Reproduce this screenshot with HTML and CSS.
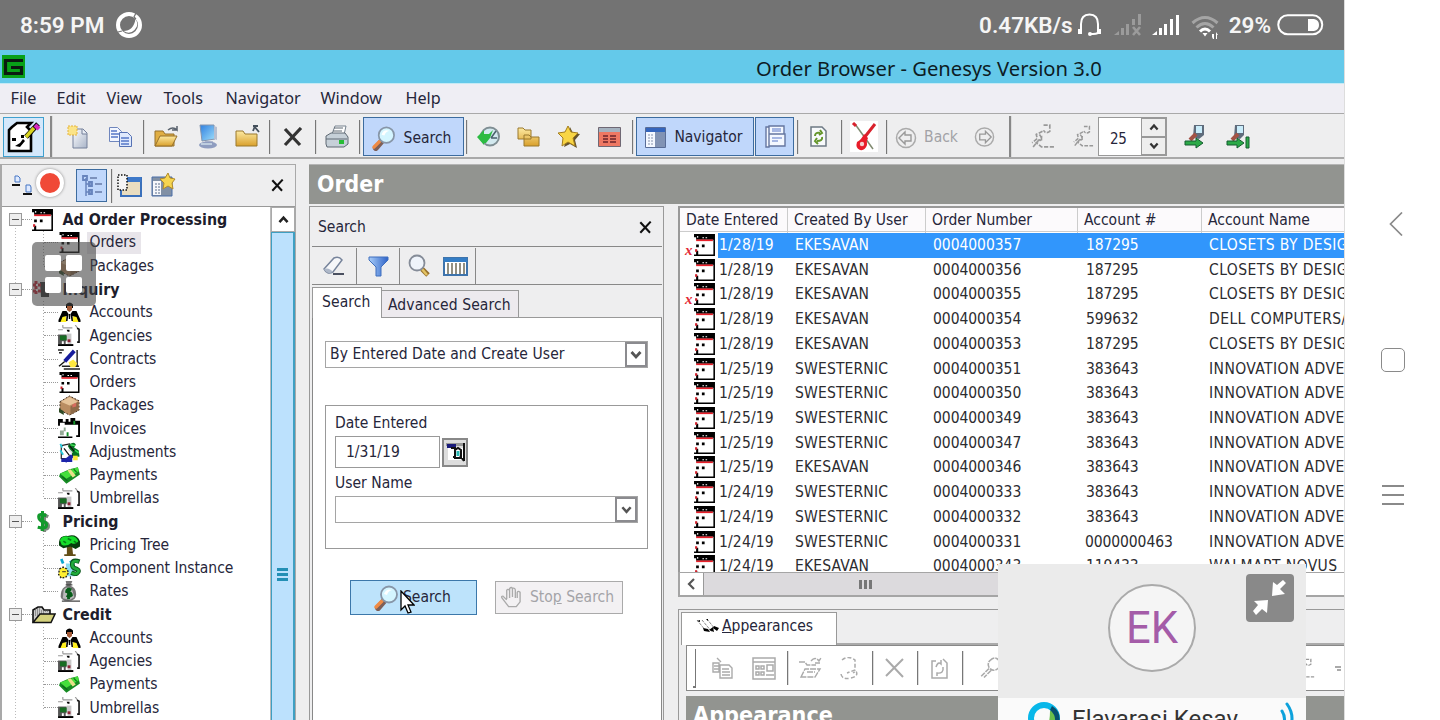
FILE: index.html
```html
<!DOCTYPE html>
<html lang="en">
<head>
<meta charset="utf-8">
<title>Order Browser - Genesys Version 3.0</title>
<link rel="stylesheet" href="styles.css">
</head>
<body>
<svg class="defs" aria-hidden="true">
  <defs>
    <linearGradient id="gold" x1="0" y1="0" x2="0" y2="1"><stop offset="0" stop-color="#fdeaa2"/><stop offset="1" stop-color="#d9a02c"/></linearGradient>
    <linearGradient id="steel" x1="0" y1="0" x2="1" y2="1"><stop offset="0" stop-color="#fdfeff"/><stop offset="1" stop-color="#a9b4c8"/></linearGradient>
    <linearGradient id="sky" x1="0" y1="0" x2="1" y2="1"><stop offset="0" stop-color="#2f7fe0"/><stop offset="1" stop-color="#9fe0fb"/></linearGradient>
    <linearGradient id="funnel" x1="0" y1="0" x2="1" y2="0"><stop offset="0" stop-color="#a9cdf8"/><stop offset="1" stop-color="#2e63c8"/></linearGradient>
    <symbol id="calendar" viewBox="0 0 20 21"><path fill="#fff" d="M1 0h19v21H1z"/><path d="M0 0h20v21H2v-1.500h16.500V5.500H2V3H0z"/><path fill="#e8202a" d="M2 5.200h16v1.600H2z"/><path fill="#fff" d="M3 2h1v1.500H3zM8 3h1.500v1H8zM11 3h1.500v1H11z"/><path d="M2 10h2.600v2.600H2zM7.500 10h2.600v2.600H7.500zM2 16h2v5H0v-1.500h2z"/><path fill="#d0202a" d="M1 14.500h2v2.500H1z"/></symbol>
    <symbol id="person" viewBox="0 0 22 21"><path fill="#ffef20" d="M2 15l4-3h10l4 3v5H2z"/><path fill="#fff" d="M7 11h8l-1 9H8z"/><path d="M7.500 2.500q3.500-4 7 0V6h-7zM4 9h4l2 3-1 7H7.500l.5-5-4 1-2 5H0v-2zM14 9h4l4 9v2h-2l-2-5-4-1 .5 5h-1.500l-1-7zM10.300 12h1.400v5h-1.400z"/><path fill="#a45b38" d="M8.500 4h5v4l-2.500 2-2.500-2z"/></symbol>
    <symbol id="agency" viewBox="0 0 24 22"><path fill="none" stroke="#999" stroke-width="1.200" d="M5 3h10M0 5h5M5 0v3M18 0l3 4"/><path d="M9 5h3v2h-2z"/><path fill="#555" d="M0 10h9v10H0z"/><path fill="#c9c9c9" d="M9 9h5v11H9z"/><path fill="#176d22" d="M2 11h7v5H2z"/><path fill="#fff" d="M4 17h2v3H4zM8 17h2v3H8z"/><path fill="#8c2436" d="M10 15h3v3h-3z"/><path d="M0 20h16v2H0z"/><path fill="none" stroke="#111" stroke-width="1.700" d="M20 3.500l2 1V18h-2"/></symbol>
    <symbol id="contract" viewBox="0 0 24 22"><path fill="#fff" d="M3 1h17v18H3z"/><path fill="none" stroke="#222" stroke-width="1.500" d="M0 1h6M1 4h3M20 1v17M4 18h18M6 21h17"/><path fill="#ffe940" d="M11 14l5-3 4 4-2 4h-5z"/><path stroke="#161b9c" stroke-width="4" d="M17 2L7 13"/><path stroke="#111" stroke-width="1.400" d="M7 13l-6 5"/></symbol>
    <symbol id="box" viewBox="0 0 22 22"><path fill="#b98d62" stroke="#3b2c1d" stroke-dasharray="2 1.500" d="M1 7l10-6 10 5v10l-10 5L1 16z"/><path fill="#e6c49a" d="M2 7l9-5 9 5-9 4z"/><path fill="#8d6a48" d="M12 12l8-5v9l-8 5z"/><path fill="#d66c5e" d="M14 10l4-2v4l-4 1z"/><path fill="#2d4a25" d="M0 14l5 3v4l-5-3z"/></symbol>
    <symbol id="invoice" viewBox="0 0 24 22"><path fill="#fff" d="M2 2h20v18H2z"/><path d="M0 1h5v3h3V1h3v3h2V0h5v3h5v17h-4v-2h2V7H7V5H2v3H0zM0 19.500h15V21H0z"/><path fill="#95aa97" d="M2 13h4v5H2zM6 10h2v4H6z"/><path fill="#159029" d="M16 3h2v4h-2zM9 15h2v4H9z"/></symbol>
    <symbol id="adjust" viewBox="0 0 24 23"><path fill="#fff" stroke="#222" stroke-width="1.300" d="M3 4l9-2 5 6-3 11-11-1z"/><path fill="#087323" d="M10 4q7-6 9-1l-2 3 5 3 1 7-6 1z"/><path stroke="#3fdf55" stroke-width="1.600" d="M13 3l5 1M18 9l4 3"/><path stroke="#25c8da" stroke-width="2" d="M2 2l2 4M2 9l3 5"/><path stroke="#1c24aa" stroke-width="4" d="M3 20h12M7 21l8-6"/><path stroke="#111" stroke-width="1.300" d="M6 7l6 8M12 4l5 6"/><path fill="#ffe838" d="M16 15h5v5h-5z"/><path stroke="#ddd" stroke-width="2" d="M11 8l4 4"/></symbol>
    <symbol id="cash" viewBox="0 0 22 18"><path fill="#168b23" d="M1 10l7 7L21 8l-2-7-8 2-9 4z"/><path fill="#45df3c" d="M2 7l9-3L19 1l1 4-12 7z"/><path fill="#e9e08a" d="M9 4l3-1 5 6-3 2z"/><path stroke="#0b6819" d="M4 10l5 4M15 3l3 3"/></symbol>
    <symbol id="dollar" viewBox="0 0 14 22"><path fill="none" stroke="#7d8a7e" stroke-width="3.500" d="M13 6Q5 2 5 8q0 3 4 4 5 1 4 5-1 3-8 2M9 2v20"/><path fill="none" stroke="#129a2c" stroke-width="3.200" d="M11 5Q3 2 3 6q0 4 5 5 4 1 3 5-1 3-9 1M7 0v21"/></symbol>
    <symbol id="tree" viewBox="0 0 24 24"><path fill="#624d16" d="M9 12h6l1 10h3v2H6v-2h3z"/><path fill="#063d0d" d="M0 8Q1 0 10 1q10-3 14 6v6l-5 3-6-3-8 2-5-3z"/><path fill="#16dc2a" d="M1 6Q4 0 11 2q8-2 11 5-3 5-8 2-6 5-11 2z"/><path stroke="#087b17" stroke-width="2" d="M5 7l3 2M10 4l4 2M17 7l3 2"/></symbol>
    <symbol id="component" viewBox="0 0 24 23"><path fill="#8bdcf1" d="M8 6h10v14H9z"/><path stroke="#09a7d0" stroke-width="3" d="M3 1l2 5M13 3l3 6"/><path fill="none" stroke="#08551a" stroke-width="5" d="M23 4q-8-3-8 3 0 4 5 5 4 2 0 5-2 1-6-1"/><path fill="none" stroke="#20ab3c" stroke-width="3" d="M22 4q-7-2-7 3 0 4 5 5 4 2 0 5-2 1-6-1"/><path fill="#ffef30" stroke="#222" stroke-dasharray="2 1.500" stroke-width="1.500" d="M1 12l4-2 4 2 2 4-3 5-5 1-3-4z"/><path stroke="#222" d="M4 15h4M13 20v3"/></symbol>
    <symbol id="bag" viewBox="0 0 24 22"><path fill="#777" d="M8 0h7l-2 5q6 2 6 9 0 7-8 7Q1 21 3 13q1-6 6-8z"/><path fill="#bbb" d="M6 9q4-5 9 1l2 7-5 3-7-2z"/><path fill="none" stroke="#075d19" stroke-width="3" d="M14 9q-5-1-5 2 5 1 5 4-2 2-5 0M11 7v12"/><path stroke="#444" stroke-width="1.400" d="M4 21h19M8 4h7"/></symbol>
    <symbol id="openfolder" viewBox="0 0 24 18"><path fill="#ccc" stroke="#111" stroke-width="1.600" d="M1 16V4l5-3h4l2 3h6v4"/><path stroke="#555" stroke-dasharray="1 1" d="M3 5h13M3 7h10M3 3h6M3 9h4"/><path fill="#d4d17d" stroke="#111" stroke-width="1.500" d="M1 16.500L8 8h15l-4 8.500z"/></symbol>
    <symbol id="lens" viewBox="0 0 26 26"><path stroke="#7d5f58" stroke-width="6" stroke-linecap="round" d="M5 23l6-7"/><path stroke="#ef8b45" stroke-width="3.500" stroke-linecap="round" d="M3 22l6-6"/><circle cx="16" cy="9.500" r="8" fill="#d4f5ff" stroke="#8796a8" stroke-width="1.800"/><path fill="#fff" d="M11 9q2-6 8-4-4 1-5 5z"/></symbol>
    <symbol id="ghostlens" viewBox="0 0 24 24"><path fill="none" stroke="#aaa" stroke-width="1.600" stroke-dasharray="5 1" d="M11 4q5-5 9 0t-1 8q-5 4-9-1-2-4 1-7zM10 12l-8 8M12 14l-7 7"/></symbol>
    <symbol id="ghostfind" viewBox="0 0 24 24"><path fill="none" stroke="#999" stroke-width="1.600" stroke-dasharray="4 1.500" d="M13 1h6v6q-4 3-6-1M12 7l-6 3 1 4-5 4M9 10l3 4M3 22l4-5 4-4v4M23 22H11l-5-4 5-3"/></symbol>
    <symbol id="hand" viewBox="0 0 22 23"><path fill="none" stroke="#aaa" stroke-width="1.400" d="M6 14L2 10q-2 0-1 2l7 9h8l4-5V6q-2-2-3 0v6M6 13V4q1-2 3 0v8M9 11V2q2-2 3 0v9M12 11V2q3-1 3 2v8"/></symbol>
    <symbol id="xmark" viewBox="0 0 20 20"><path stroke="currentColor" stroke-width="3.200" d="M2 2l15 16M18 1L2 18"/></symbol>
    <symbol id="chev" viewBox="0 0 12 10"><path fill="none" stroke="currentColor" stroke-width="2.800" d="M1.500 2l4.500 5 4.500-5"/></symbol>
  </defs>
</svg>

<div class="device">
<div class="screen">
  <header class="status">
    <div class="status-left"><span class="clock">8:59 PM</span>
      <svg width="26" height="26" viewBox="0 0 26 26"><circle cx="13" cy="13" r="11" fill="none" stroke="#fff" stroke-width="4"/><path fill="#fff" d="M19.500 7q4 6-1 11-5 5-11 1 10 0 12-12z"/><path fill="none" stroke="#737373" stroke-width="1.200" d="M20 1l-2 4 2 2M6 19l-4 1"/></svg>
    </div>
    <div class="status-right"><span class="speed">0.47KB/s</span>
      <svg width="25" height="24" viewBox="0 0 25 24"><path fill="none" stroke="#fff" stroke-width="2" d="M4 20V11Q4 1.500 12.500 1.500T21 11v9q-2 1-5 1h-3"/><path fill="#fff" d="M1 16h4v5H1zM20 16h4v5h-4z"/><circle cx="13" cy="21" r="2" fill="#fff"/></svg>
      <svg class="sig1" width="28" height="22" viewBox="0 0 28 22"><path fill="#9b9b9b" d="M0 21l5-4v4zM7 14h3v7H7zM12 10h3v11h-3zM18 5h3v6h-3zM24 0h3v11h-3z"/><path stroke="#9b9b9b" stroke-width="2.600" d="M19 13l7 8M26 13l-7 8"/></svg>
      <svg class="sig2" width="28" height="22" viewBox="0 0 28 22"><path fill="#fff" d="M0 21l5-4v4zM7 14h3v7H7zM12 10h3v11h-3zM18 5h3v16h-3zM24 1h3v20h-3z"/></svg>
      <svg class="wifi" width="29" height="24" viewBox="0 0 29 24"><path fill="none" stroke="#a5a5a5" stroke-width="3" d="M1.500 8q12.500-11 25 0M5.500 12.500q8.500-8 17 0"/><path fill="none" stroke="#fff" stroke-width="3" d="M9 16.500q5-5 10 0"/><path fill="#fff" d="M11.500 18h5L14 21.500zM21 19h2v5h-1l-1-2zM25 17l2 3h-1v4h-1z"/></svg>
      <span class="pct">29%</span>
      <svg width="47" height="22" viewBox="0 0 47 22"><rect x="1.250" y="1.250" width="44" height="19" rx="9.500" fill="none" stroke="#fff" stroke-width="2"/><path fill="#fff" d="M31 5h6q5 1 5 6t-5 6h-6z"/></svg>
    </div>
  </header>

  <div class="titlebar">
    <svg width="23" height="23" viewBox="0 0 23 23"><path fill="#08a018" d="M0 0h23v23H0z"/><path fill="none" stroke="#0b1a10" stroke-width="3.200" d="M21 5.500H3.500v13h16v-6H9"/></svg>
    <h1>Order Browser - Genesys Version 3.0</h1>
  </div>
  <nav class="menu"><span>File</span><span>Edit</span><span>View</span><span>Tools</span><span>Navigator</span><span>Window</span><span>Help</span></nav>

  <div class="toolbar">
    <span class="btn palette"><svg width="34" height="32" viewBox="0 0 34 32"><path fill="#fff" stroke="#000" stroke-width="2.600" d="M5 6l5-4h14l-4 4 4 4v20H2V9z"/><path stroke="#000" stroke-width="5" d="M19 16L31 3"/><path stroke="#d8d320" stroke-width="3.500" d="M19 16l8-9"/><path stroke="#d42ac0" stroke-width="4" d="M28 4l4 4"/><path d="M5 17h4v3H5zM14 14h3v3h-3zM8 25l5-3 3-4 2 2-5 6z"/></svg></span>
    <i class="sep tall"></i>
    <svg width="22" height="24" viewBox="0 0 22 24"><path fill="url(#steel)" stroke="#75809a" d="M6 4h10l4 4v15H6z"/><path fill="#e8edf5" stroke="#75809a" d="M15 4v5h5"/><path fill="#fbe488" stroke="#e4b23c" stroke-dasharray="2 1" d="M1 1h9v9H1z"/></svg>
    <svg width="25" height="22" viewBox="0 0 25 22"><path fill="#f2f6ff" stroke="#6f86bd" d="M1.500 1.500h8l4 4v10h-12z"/><path fill="#dfe9fd" stroke="#5672b4" d="M11.500 6.500h8l4 4v10h-12z"/><path stroke="#5778c8" stroke-width="1.300" d="M3 5h6M3 8h8M3 11h7M13 12h8M13 15h8M13 18h8"/></svg>
    <i class="sep"></i>
    <svg width="25" height="23" viewBox="0 0 25 23"><path fill="#e0ae43" stroke="#96712b" d="M1 21V6h8l2 3h9v12z"/><path fill="url(#gold)" stroke="#96712b" d="M1 21l5-10h17l-5 10z"/><path fill="none" stroke="#59626e" stroke-width="1.500" d="M14 5q5-4 9 0V1M23 5h-5"/></svg>
    <svg width="20" height="25" viewBox="0 0 20 25"><path fill="url(#sky)" stroke="#8495ae" d="M2 1h14l1 14-13 2z"/><path fill="#b8bfd0" d="M16 2l3 1v13l-3-1zM7 17h8v3H7z"/><ellipse cx="10" cy="21" rx="9" ry="3.500" fill="#8f9dc0"/><path stroke="#eff" d="M3 20h11"/></svg>
    <svg width="25" height="23" viewBox="0 0 25 23"><path fill="url(#gold)" stroke="#9a782c" d="M1 6h7l2 3h12v12H1z"/><path fill="none" stroke="#45505c" stroke-width="1.800" d="M20 1l-2 5M18 1h5M19 1l5 6"/></svg>
    <i class="sep"></i>
    <svg class="dark" width="20" height="20"><use href="#xmark"/></svg>
    <i class="sep"></i>
    <svg width="24" height="23" viewBox="0 0 24 23"><path fill="#fff" stroke="#76828e" d="M7 9l3-8h11l-2 9z"/><path fill="#c6d0d8" stroke="#5e6872" d="M1 11l5-3h14l3 4v7l-4 3H2l-1-3z"/><path stroke="#5e6872" d="M1 14h21M9 3h9M8 6h9"/><path fill="#27bd35" d="M14 15h5v4h-5z"/></svg>
    <i class="sep"></i>
    <span class="btn on search-btn"><svg width="25" height="25"><use href="#lens"/></svg>Search</span>
    <i class="sep"></i>
    <svg width="24" height="21" viewBox="0 0 24 21"><circle cx="13" cy="10.500" r="9" fill="#d3e9ef" stroke="#7f8e93" stroke-width="2"/><path fill="#2cbb43" d="M0 11l7-7v4h5l4-4-3 8-4 5H7v2z"/><path stroke="#49606b" stroke-width="1.500" d="M14 12l5-7M14 12h6"/></svg>
    <svg width="23" height="21" viewBox="0 0 23 21"><path fill="url(#gold)" stroke="#9a782c" d="M1 2h5l2 2h6v9H1zM7 9h5l2 2h8v9H7z"/></svg>
    <svg width="23" height="23" viewBox="0 0 23 23"><path fill="#66542d" d="M13 2l3 6 7 1-5 6 2 8-7-4-6 3z"/><path fill="#f8d544" stroke="#a47d1c" d="M11 1l3 6 7 1-5 5 2 8-7-4-6 4 1-8-5-5 7-1z"/></svg>
    <svg width="23" height="20" viewBox="0 0 23 20"><path fill="#ee7863" stroke="#6f6874" d="M.5.500h22v19H.500z"/><path fill="#a5b2bf" d="M1 1h21v4H1z"/><path stroke="#6b232b" stroke-width="1.500" d="M5 9h5M12 9h6M5 12h5M12 12h6M5 15h5M12 15h6"/></svg>
    <i class="sep"></i>
    <span class="btn on nav-btn"><svg width="21" height="21" viewBox="0 0 21 21"><path fill="#f4f8ff" stroke="#596d97" d="M.5.500h20v20H.500z"/><path fill="#3465bd" d="M1 1h19v4H1z"/><path fill="#8193b4" d="M10 5h10v15H10z"/><path stroke="#8793ad" stroke-dasharray="2 1" d="M3 8h5M3 11h5M3 14h5M3 17h5"/></svg>Navigator</span>
    <span class="btn on cards"><svg width="22" height="23" viewBox="0 0 22 23"><path fill="#f4f8ff" stroke="#6476a0" stroke-width="1.400" d="M5 1h15v8H5zM5 9h16v12H5zM2 2h3v20H2z"/><path stroke="#5877c8" stroke-width="1.200" d="M8 4h9M8 6h9M8 13h10M8 16h6"/></svg></span>
    <i class="sep"></i>
    <svg width="18" height="22" viewBox="0 0 18 22"><path fill="#f8fafc" stroke="#6d7984" stroke-width="1.500" d="M1 1h11l4 4v15H1z"/><path fill="none" stroke="#65962c" stroke-width="2" d="M5 10q0-4 5-3M10 4l2 3-3 2M12 11q1 4-5 4M7 12l-2 3 3 3"/></svg>
    <i class="sep"></i>
    <span class="whitebox"><svg width="26" height="29" viewBox="0 0 26 29"><path stroke="#808a70" stroke-width="1.500" d="M4 2l18 25"/><path stroke="#d9212c" stroke-width="3" d="M24 2L13 16M2 1l3 3"/><path fill="#e81c2a" d="M13 12l4 4q-2 3-1 7-2 6-7 5-5-2-3-8 5-3 7-8z"/><circle cx="11" cy="22" r="2.200" fill="#f4cfcf"/></svg></span>
    <i class="sep"></i>
    <span class="back"><svg width="22" height="22" viewBox="0 0 22 22"><circle cx="11" cy="11" r="9.500" fill="none" stroke="#aaa" stroke-width="1.500"/><path fill="none" stroke="#999" stroke-width="1.400" d="M4 11l6-6v3h6v6h-6v3z"/></svg>Back</span>
    <svg width="21" height="22" viewBox="0 0 22 22"><circle cx="11" cy="11" r="9.500" fill="none" stroke="#aaa" stroke-width="1.500"/><path fill="none" stroke="#999" stroke-width="1.400" d="M18 11l-6-6v3H6v6h6v3z"/></svg>
    <i class="sep tall"></i>
    <svg width="25" height="25"><use href="#ghostfind"/></svg>
    <svg width="22" height="25"><use href="#ghostfind"/></svg>
    <span class="spin"><b>25</b><span class="spin-btns"><i><svg class="up" width="10" height="8"><use href="#chev"/></svg></i><i><svg width="10" height="8"><use href="#chev"/></svg></i></span></span>
    <svg width="24" height="26" viewBox="0 0 24 26"><path fill="#5f6c7c" d="M11 1h10v10l-5 4-6-2z"/><path fill="#c9ecfa" d="M13 2h6v7h-6z"/><path stroke="#a35245" stroke-width="4" d="M13 10l-6 6"/><path fill="#2caa48" stroke="#155d30" d="M2 17h11v-3l7 5-7 5v-3H2z"/></svg>
    <svg width="24" height="26" viewBox="0 0 24 26"><path fill="#5f6c7c" d="M9 1h9v10l-4 4-6-2z"/><path fill="#c9ecfa" d="M11 2h6v7h-6z"/><path stroke="#a35245" stroke-width="4" d="M12 10l-6 6"/><path fill="#2caa48" stroke="#155d30" d="M1 17h10v-3l7 5-7 5v-3H1zM20 13h3v11h-3z"/></svg>
  </div>

  <main class="work">
    <aside class="navigator">
      <div class="nav-head">
        <svg width="52" height="24" viewBox="0 0 52 24"><path fill="#dfeaff" stroke="#4777c4" d="M3 2h3l2 2v4H3zM14 11h4l1 2v5h-5z"/><path stroke="#111" stroke-width="2" d="M0 11h8M11 20h9"/><path stroke="#888" stroke-width="1.500" d="M48 11h5"/></svg>
        <span class="btn on tree-btn"><svg width="22" height="24" viewBox="0 0 22 24"><path fill="none" stroke="#6784bd" stroke-width="1.500" d="M5 4v18M5 10h6M5 18h6"/><path fill="none" stroke="#6784bd" stroke-width="1.800" d="M2 2h4v4H2zM8 8h3v4H8zM8 16h3v4H8z"/><path stroke="#667ba8" stroke-width="1.600" d="M9 4h7M14 10h7M14 18h7"/></svg></span>
        <i class="sep"></i>
        <svg class="n3" width="25" height="23" viewBox="0 0 25 23"><path fill="#e9ddc0" stroke="#3a70bb" stroke-width="2" d="M4 4h20v18H4z"/><path fill="#3e79c9" d="M10 3h14v5H10z"/><path fill="#f5f5f5" stroke="#111" stroke-width="1.500" stroke-dasharray="1.500 1.500" d="M1 1h9v15H1z"/></svg>
        <svg class="n4" width="25" height="25" viewBox="0 0 25 25"><path fill="#8190a5" stroke="#4a6ea8" d="M1 4h20v19H1z"/><path fill="#f6f7fb" d="M2 8h8v14H2z"/><path stroke="#596c8b" stroke-dasharray="2 1" d="M4 11h5M4 14h5M4 17h5M4 20h5"/><path fill="#f6d550" stroke="#b28b28" d="M17 0l2 5 5 1-3 4 1 6-5-3-5 3 1-6-4-4 5-1z"/></svg>
        <svg class="close" width="13" height="13"><use href="#xmark"/></svg>
      </div>
      <div class="nav-body">
        <div class="tree">
          <div class="root"><i class="box"></i><i class="dash"></i><svg width="21" height="22"><use href="#calendar"/></svg><b>Ad Order Processing</b></div>
          <ul>
            <li><svg><use href="#calendar"/></svg><span class="sel">Orders</span></li>
            <li><svg><use href="#box"/></svg>Packages</li>
          </ul>
          <div class="root"><i class="box"></i><i class="dash"></i><svg width="21" height="18" viewBox="0 0 21 18"><path fill="#333" d="M8 2h9v15H9z"/><path stroke="#c52535" stroke-width="3" stroke-dasharray="3 2" d="M1 5h8M1 11h8M4 1v14"/></svg><b>Inquiry</b></div>
          <ul>
            <li><svg><use href="#person"/></svg>Accounts</li>
            <li><svg><use href="#agency"/></svg>Agencies</li>
            <li><svg><use href="#contract"/></svg>Contracts</li>
            <li><svg><use href="#calendar"/></svg>Orders</li>
            <li><svg><use href="#box"/></svg>Packages</li>
            <li><svg><use href="#invoice"/></svg>Invoices</li>
            <li><svg><use href="#adjust"/></svg>Adjustments</li>
            <li><svg><use href="#cash"/></svg>Payments</li>
            <li><svg><use href="#agency"/></svg>Umbrellas</li>
          </ul>
          <div class="root"><i class="box"></i><i class="dash"></i><svg width="21" height="21"><use href="#dollar"/></svg><b>Pricing</b></div>
          <ul>
            <li><svg><use href="#tree"/></svg>Pricing Tree</li>
            <li><svg><use href="#component"/></svg>Component Instance</li>
            <li><svg><use href="#bag"/></svg>Rates</li>
          </ul>
          <div class="root"><i class="box"></i><i class="dash"></i><svg width="24" height="18"><use href="#openfolder"/></svg><b class="wide-icon">Credit</b></div>
          <ul>
            <li><svg><use href="#person"/></svg>Accounts</li>
            <li><svg><use href="#agency"/></svg>Agencies</li>
            <li><svg><use href="#cash"/></svg>Payments</li>
            <li><svg><use href="#agency"/></svg>Umbrellas</li>
          </ul>
        </div>
        <div class="vscroll"><span class="vup"><svg class="up" width="13" height="9"><use href="#chev"/></svg></span><span class="vthumb"><i></i><i></i><i></i></span></div>
      </div>
    </aside>

    <section class="order">
      <h2>Order</h2>
      <div class="panes">
        <section class="finder">
          <div class="finder-head">Search<svg width="13" height="13"><use href="#xmark"/></svg></div>
          <div class="finder-tools">
            <span><svg width="24" height="20" viewBox="0 0 24 20"><path fill="#f6f7f9" stroke="#77849b" stroke-width="1.500" d="M2 13L12 2q5-2 8 2l-9 12q-6 3-9-3z"/><path fill="#aeb8c9" d="M2 13q5-2 9 3-6 3-9-3z"/><path stroke="#4a5060" stroke-width="2" d="M11 18h11"/></svg></span>
            <span><svg width="21" height="21" viewBox="0 0 21 21"><path fill="url(#funnel)" stroke="#3f6fbe" d="M1 1h19v3l-7 7v9H8v-9L1 4z"/></svg></span>
            <span><svg width="23" height="24" viewBox="0 0 23 24"><path stroke="#97712c" stroke-width="5" d="M14 15l6 6"/><path stroke="#e4c363" stroke-width="2.500" d="M14 15l5 6"/><circle cx="9" cy="9" r="7.500" fill="#eff4fb" stroke="#858c98" stroke-width="1.800"/></svg><svg width="25" height="19" viewBox="0 0 25 19"><path fill="#fff" stroke="#3e74ac" stroke-width="2" d="M1 1h23v17H1z"/><path fill="#347dc5" d="M1 1h23v4H1z"/><path stroke="#777462" stroke-width="1.600" d="M5 6v11M9 6v11M13 6v11M17 6v11M21 6v11"/></svg></span>
          </div>
          <div class="tabs"><span class="tab active">Search</span><span class="tab">Advanced Search</span></div>
          <div class="form">
            <div class="combo">By Entered Date and Create User<i><svg width="12" height="10"><use href="#chev"/></svg></i></div>
            <div class="group">
              <label>Date Entered</label>
              <div class="date"><span class="field">1/31/19</span><span class="pick"><svg width="19" height="19" viewBox="0 0 19 19"><path fill="#fff" d="M2 5h15v12H2z"/><path fill="#999" d="M0 0h19v3H0z"/><path fill="#191a7a" d="M1 1h9v4H1z"/><path fill="none" stroke="#111" stroke-width="2" d="M18 0v18M5 5h4v9H7M9 7l3-2 3 2v8H8M14 13l4 5"/><path fill="#27b7b2" d="M10.500 8h3v5h-3z"/></svg></span></div>
              <label>User Name</label>
              <div class="combo small"><i><svg width="11" height="10"><use href="#chev"/></svg></i></div>
            </div>
            <div class="actions">
              <span class="go"><svg width="26" height="26"><use href="#lens"/></svg>Search</span>
              <span class="stop"><svg width="21" height="23"><use href="#hand"/></svg><span>Sto<u>p</u> Search</span></span>
            </div>
          </div>
        </section>

        <section class="results">
          <div class="grid">
            <div class="thead"><span>Date Entered</span><span>Created By User</span><span>Order Number</span><span>Account #</span><span>Account Name</span></div>
            <div class="row picked"><em>x</em><svg><use href="#calendar"/></svg><span>1/28/19</span><span>EKESAVAN</span><span>0004000357</span><span>187295</span><span>CLOSETS BY DESIGN</span></div>
            <div class="row"><em></em><svg><use href="#calendar"/></svg><span>1/28/19</span><span>EKESAVAN</span><span>0004000356</span><span>187295</span><span>CLOSETS BY DESIGN</span></div>
            <div class="row"><em>x</em><svg><use href="#calendar"/></svg><span>1/28/19</span><span>EKESAVAN</span><span>0004000355</span><span>187295</span><span>CLOSETS BY DESIGN</span></div>
            <div class="row"><em></em><svg><use href="#calendar"/></svg><span>1/28/19</span><span>EKESAVAN</span><span>0004000354</span><span>599632</span><span>DELL COMPUTERS/A</span></div>
            <div class="row"><em></em><svg><use href="#calendar"/></svg><span>1/28/19</span><span>EKESAVAN</span><span>0004000353</span><span>187295</span><span>CLOSETS BY DESIGN</span></div>
            <div class="row"><em></em><svg><use href="#calendar"/></svg><span>1/25/19</span><span>SWESTERNIC</span><span>0004000351</span><span>383643</span><span>INNOVATION ADVE</span></div>
            <div class="row"><em></em><svg><use href="#calendar"/></svg><span>1/25/19</span><span>SWESTERNIC</span><span>0004000350</span><span>383643</span><span>INNOVATION ADVE</span></div>
            <div class="row"><em></em><svg><use href="#calendar"/></svg><span>1/25/19</span><span>SWESTERNIC</span><span>0004000349</span><span>383643</span><span>INNOVATION ADVE</span></div>
            <div class="row"><em></em><svg><use href="#calendar"/></svg><span>1/25/19</span><span>SWESTERNIC</span><span>0004000347</span><span>383643</span><span>INNOVATION ADVE</span></div>
            <div class="row"><em></em><svg><use href="#calendar"/></svg><span>1/25/19</span><span>EKESAVAN</span><span>0004000346</span><span>383643</span><span>INNOVATION ADVE</span></div>
            <div class="row"><em></em><svg><use href="#calendar"/></svg><span>1/24/19</span><span>SWESTERNIC</span><span>0004000333</span><span>383643</span><span>INNOVATION ADVE</span></div>
            <div class="row"><em></em><svg><use href="#calendar"/></svg><span>1/24/19</span><span>SWESTERNIC</span><span>0004000332</span><span>383643</span><span>INNOVATION ADVE</span></div>
            <div class="row"><em></em><svg><use href="#calendar"/></svg><span>1/24/19</span><span>SWESTERNIC</span><span>0004000331</span><span class="long">0000000463</span><span>INNOVATION ADVE</span></div>
            <div class="row"><em></em><svg><use href="#calendar"/></svg><span>1/24/19</span><span>EKESAVAN</span><span>0004000343</span><span>119433</span><span>WALMART NOVUS</span></div>
          </div>
          <div class="hscroll"><span class="hleft"><svg width="9" height="12" viewBox="0 0 9 12"><path fill="none" stroke="#555" stroke-width="2.200" d="M7 1L2 6l5 5"/></svg></span><span class="hthumb"><i></i><i></i><i></i></span><span class="hrest"></span></div>
          <div class="detail">
            <div class="dtabs"><span><svg width="23" height="15" viewBox="0 0 23 15"><path fill="none" stroke="#888" stroke-dasharray="3 1" d="M1 1l9 11M6 1l10 12M11 0l8 10"/><path d="M1 2l3-1v2zM7 9l5 1 2 3-6-1zM13 11l4-3 1 5zM18 7l5 2-2 3-4-3zM10 0h2v2z"/></svg><span><u>A</u>ppearances</span></span></div>
            <div class="dtools">
              <i class="grip"></i>
              <svg width="24" height="22" viewBox="0 0 24 22"><path fill="none" stroke="#aaa" stroke-width="1.400" d="M2 6h6v9H2zM9 8h9l3 3v10H9zM6 1l4 4M3 9h5M3 12h5M11 12h7M11 15h8M11 18h8"/></svg>
              <svg width="25" height="23" viewBox="0 0 25 23"><path fill="none" stroke="#aaa" stroke-width="1.500" d="M1 1h22v21H1zM1 5h22M4 9h3v3H4zM9 9h3v3H9zM15 8h6v6h-6zM4 15h3v3H4zM9 15h3v3H9zM14 18h8"/></svg>
              <i class="sep"></i>
              <svg width="25" height="22" viewBox="0 0 25 22"><path fill="none" stroke="#aaa" stroke-width="1.400" stroke-dasharray="6 1" d="M1 5h6l2 3h9M3 20l4-8h15l-5 8zM13 4q4-5 8 0l2-3M22 6h-5M9 15h8"/></svg>
              <svg width="20" height="23" viewBox="0 0 20 23"><path fill="none" stroke="#aaa" stroke-width="1.500" stroke-dasharray="4 2" d="M2 3q6-5 13 0v10l-8 3M1 17q1 6 10 4 8-2 5-7l-3 2"/></svg>
              <i class="sep"></i>
              <svg width="20" height="20" viewBox="0 0 20 20"><path stroke="#aaa" stroke-width="2" d="M1 1l17 18M18 1L1 18"/></svg>
              <i class="sep"></i>
              <svg width="18" height="22" viewBox="0 0 18 22"><path fill="none" stroke="#aaa" stroke-width="1.500" d="M5 4H1v17h15V6l-4-4M5 10q2-6 5-3V3M12 10q1 7-6 6v3"/></svg>
              <i class="sep"></i>
              <svg width="24" height="25"><use href="#ghostlens"/></svg>
              <svg class="far" width="20" height="25"><use href="#ghostfind"/></svg>
              <svg class="edge" width="8" height="8" viewBox="0 0 8 8"><path fill="none" stroke="#aaa" stroke-width="2" d="M1 3h6M3 6h4"/></svg>
            </div>
            <h3>Appearance</h3>
          </div>
        </section>
      </div>
    </section>
  </main>

  <div class="record"></div>
  <div class="float"><i></i><i></i><i></i><i></i></div>
  <svg class="pointer" width="15" height="24" viewBox="0 0 15 24"><path fill="#fff" stroke="#000" stroke-width="1.300" d="M1 1v19l4-4 3 7 3-1-3-7h6z"/></svg>
  <div class="call">
    <div class="call-top">
      <span class="avatar">EK</span>
      <span class="shrink"><svg width="34" height="36" viewBox="0 0 34 36"><path fill="#fff" d="M19 16l1-14 4 3 6-5 3 3-6 6 5 5zM15 20l-14 1 4 4-5 6 3 4 6-6 5 4z"/></svg></span>
    </div>
    <div class="call-name">
      <svg width="32" height="32" viewBox="0 0 32 32"><circle cx="16" cy="16" r="13" fill="none" stroke="#08b7e9" stroke-width="6"/><path fill="#6abf4b" d="M22 9h5v15h-7q2-7 2-15z"/><path fill="#07516e" d="M24 4q10 6 7 18l-4-2q1-7-5-12z"/></svg>
      <span>Elavarasi Kesav</span>
      <svg width="16" height="34" viewBox="0 0 16 34"><path fill="none" stroke="#0da2dc" stroke-width="3" stroke-linecap="round" d="M8 2q10 14 0 29M3 9q5 8 0 16"/></svg>
    </div>
  </div>
</div>
<div class="keys">
  <svg class="k-back" width="14" height="24" viewBox="0 0 14 24"><path fill="none" stroke="#8a8a8a" stroke-width="1.700" d="M13 .500L1.500 12 13 23.500"/></svg>
  <i class="k-home"></i>
  <span class="k-menu"><i></i><i></i><i></i></span>
</div>
</div>
</body>
</html>
```

FILE: styles.css
```css
* { box-sizing: border-box; }
body { margin: 0; background: #fff; overflow: hidden; color: #26263a; font: 15.5px/1.2 "DejaVu Sans Condensed", "DejaVu Sans", sans-serif; font-stretch: condensed; }
h1, h2, h3, ul { margin: 0; padding: 0; }
svg { display: block; flex: none; }
i { font-style: normal; }
.defs { position: absolute; width: 0; height: 0; }
.up { transform: scaleY(-1); }

.device { display: flex; width: 1440px; height: 720px; }
.screen { position: relative; width: 1344px; height: 720px; overflow: hidden; display: flex; flex-direction: column; background: #eeeeef; }
.keys { width: 96px; border-left: 1px solid #ddd; background: #fff; display: flex; flex-direction: column; align-items: center; }
.k-back { margin-top: 212px; margin-left: 6px; }
.k-home { width: 24px; height: 24px; margin-top: 112px; border: 1.500px solid #8a8a8a; border-radius: 5px; }
.k-menu { display: grid; gap: 7px; margin-top: 113px; }
.k-menu i { width: 22px; height: 2px; background: #8a8a8a; }

/* phone status bar */
.status { height: 50px; flex: none; display: flex; justify-content: space-between; background: #737373; color: #f5f5f5; font: 600 22.500px/54px Roboto, sans-serif; padding: 0 20px 0 20px; }
.status-left, .status-right { display: flex; align-items: center; }
.status-left svg { margin-left: 12px; }
.clock { letter-spacing: 0; }
.speed { margin-right: 4px; }
.sig1 { margin-left: 12px; }
.sig2 { margin-left: 10px; }
.wifi { margin-left: 11px; margin-right: 9px; margin-top: 4px; }
.pct { margin-right: 6px; }

.titlebar { height: 34px; flex: none; display: flex; align-items: flex-start; background: #64c9ea; border-bottom: 1px solid #c5eaf5; padding: 5px 0 0 2px; }
.titlebar h1 { margin-left: 731px; color: #0d1c24; font: 400 20.200px/26px "Noto Sans", sans-serif; white-space: nowrap; }
.menu { height: 30px; flex: none; display: grid; grid-template-columns: 46px 50px 57px 62px 95px 85px 60px; padding-left: 10.500px; background: #efeef4; border-bottom: 1px solid #a9a9a9; font: 400 16.200px/28px "Noto Sans", sans-serif; }

/* main toolbar */
.toolbar { height: 45px; flex: none; display: grid; grid-template-columns: 41px 13px 42px 42px 5px 41px 41px 39px 5px 41px 5px 38px 7px 101px 5px 39px 40px 41px 40px 7px 118px 41px 5px 38px 6px 40px 5px 77px 37px 14px 50px 31px 69px 55px 32px; align-items: center; justify-items: center; padding: 2px 0 0 3px; border-bottom: 2px solid #a9a9a9; }
.sep { width: 1px; height: 34px; background: #777; box-shadow: 1px 0 #ddd; }
.sep.tall { height: 41px; width: 2px; background: #888; }
.btn { display: flex; align-items: center; justify-content: center; height: 39px; width: 100%; }
.btn.on { background: #c0d7fb; border: 1px solid #3d6c9f; }
.palette { background: #d4e8fb; border: 1.500px solid #3fa0cf; height: 40px; }
.toolbar .search-btn { gap: 8px; padding: 3px 5px 0 0; }
.toolbar .nav-btn { gap: 8px; padding: 2px 2px 0 0; }
.toolbar .cards { width: 39px; }
.dark { color: #333; }
.whitebox { background: #fff; padding: 1px; }
.back { display: flex; align-items: center; gap: 7px; color: #a2a2a6; padding: 2px 2px 0 0; }
.spin { display: flex; width: 69px; height: 39px; border: 1px solid #999; background: #fff; }
.spin b { flex: 1; font-weight: 400; font-size: 15px; line-height: 42px; padding-left: 11px; letter-spacing: -.3px; }
.spin-btns { width: 25px; display: grid; grid-template-rows: 1fr 1fr; color: #333; }
.spin-btns i { display: flex; align-items: center; justify-content: center; border: 1px solid #999; background: #eee; }

.work { flex: 1; min-height: 0; display: flex; padding-top: 5px; }

/* navigator tree */
.navigator { width: 296px; flex: none; border: 1px solid #a9a9a9; border-width: 1px 1px 0 2px; display: flex; flex-direction: column; }
.nav-head { height: 42px; flex: none; display: flex; align-items: center; padding-left: 10px; border-bottom: 1px solid #999; }
.tree-btn { width: 31px; height: 33px; margin-left: 12px; }
.nav-head .sep { margin: 0 5px 0 4px; }
.nav-head .n4 { margin-left: 9px; }
.nav-head .close { margin-left: auto; margin-right: 11px; color: #111; }
.nav-body { flex: 1; min-height: 0; display: flex; background: #fff; }
.tree { flex: 1; overflow: hidden; padding-left: 7px; padding-top: 1px; background: repeating-linear-gradient(#bbb 0 1px, #fff 1px 3px) 13px 12px / 1px 100% no-repeat; }
.root { display: flex; align-items: center; height: 23.260px; white-space: nowrap; }
.root .box { width: 13px; height: 13px; flex: none; border: 1px solid #999; background: linear-gradient(#555, #555) 2px 5px / 7px 1px no-repeat #eee; }
.root .dash { width: 10px; flex: none; border-top: 1px dotted #999; }
.root b { margin-left: 9.500px; font-size: 15.850px; color: #1d1d2c; }
.root b.wide-icon { margin-left: 6.500px; }
.tree ul { list-style: none; background: repeating-linear-gradient(#aaa 0 1px, #fff 1px 3px) 34px 0 / 1px calc(100% - 11px) no-repeat; }
.tree li { height: 23.260px; display: flex; align-items: center; padding-left: 35px; white-space: nowrap; letter-spacing: -.05px; }
.tree li::before { content: ""; width: 14px; flex: none; border-top: 1px dotted #999; }
.tree li svg { width: 23px; height: 21px; margin-right: 8.500px; }
.tree .sel { background: #e8e5ea; margin-left: -3px; padding: 1px 5px 2px 3px; }
.vscroll { width: 25px; flex: none; display: flex; flex-direction: column; border-left: 1px solid #bbb; }
.vup { height: 25px; flex: none; display: flex; align-items: center; justify-content: center; border: 1px solid #aaa; color: #222; }
.vthumb { flex: 1; background: #bce1fd; border: 2px solid #3e9fc2; border-width: 1px 2px 0 1px; padding-top: 335px; display: flex; flex-direction: column; align-items: center; gap: 2px; }
.vthumb i { width: 11px; height: 3px; background: #238fb5; }

/* order area */
.order { flex: 1; min-width: 0; margin-left: 13px; display: flex; flex-direction: column; }
.order h2 { height: 40px; flex: none; background: #929490; border-top: 1px solid #b5b5b5; color: #fff; padding-left: 8px; font-size: 22.800px; line-height: 39px; }
.panes { flex: 1; min-height: 0; display: flex; gap: 14px; padding-top: 2px; }

.finder { width: 355px; flex: none; border: 1px solid #999; border-bottom: 0; padding: 0 1px 0 2px; display: flex; flex-direction: column; }
.finder-head { height: 40px; flex: none; display: flex; align-items: center; justify-content: space-between; padding: 2px 10px 0 6px; border-bottom: 1px solid #888; }
.finder-head svg { color: #111; }
.finder-tools { height: 38px; flex: none; display: flex; border-bottom: 1px solid #888; padding-top: 1px; }
.finder-tools span { width: 45px; border-right: 1px solid #888; display: flex; align-items: center; justify-content: center; }
.finder-tools span:nth-child(2) { width: 43px; }
.finder-tools span:nth-child(3) { width: 76px; gap: 12px; }
.tabs { height: 33px; flex: none; display: flex; align-items: flex-end; border-bottom: 1px solid #999; padding-top: 3px; }
.tab { height: 27px; border: 1px solid #999; border-bottom: 0; border-left: 0; padding: 5px 8px 0 6px; width: 137px; background: #edeaee; white-space: nowrap; letter-spacing: .1px; }
.tab.active { height: 31px; width: 70px; padding: 5px 0 0 9px; background: #fff; margin-bottom: -1px; border-left: 1px solid #999; }
.form { flex: 1; background: #fff; border: 1px solid #888; border-width: 0 1px 0 1px; padding: 23px 13px 0 12px; }
.combo { height: 27px; display: flex; align-items: center; justify-content: space-between; border: 1px solid #a5a5a5; padding-left: 4px; white-space: nowrap; letter-spacing: .08px; }
.combo i { width: 22px; height: 25px; display: flex; align-items: center; justify-content: center; border: 2px solid #8b8b8f; color: #555; }
.group { height: 144px; margin-top: 37px; border: 1px solid #999; padding: 8px 9px 0; display: flex; flex-direction: column; }
.group label { line-height: 19px; }
.date { display: flex; align-items: center; gap: 2px; margin: 3px 0 6px; }
.field { width: 105px; height: 32px; border: 1px solid #999; padding-left: 10px; line-height: 31px; }
.pick { width: 26px; height: 29px; border: 2px solid #888; background: #ddd; display: flex; align-items: center; justify-content: center; }
.group .combo { margin-top: 3px; justify-content: flex-end; }
.actions { display: flex; margin: 31px 0 0 25px; gap: 18px; align-items: center; }
.go { width: 127px; height: 35px; flex: none; border: 1px solid #3c78aa; background: #bde3fb; display: flex; align-items: center; gap: 4px; padding-left: 22px; }
.stop { width: 128px; height: 33px; flex: none; border: 1px solid #aaa; background: #f3f1f3; color: #a4a4a8; display: flex; align-items: center; gap: 8px; padding-left: 5px; white-space: nowrap; }

/* result list */
.results { flex: 1; min-width: 0; display: flex; flex-direction: column; }
.grid { height: 366px; flex: none; overflow: hidden; background: #fff; border: 1px solid #999; border-width: 2px 0 0 2px; color: #2c2c30; }
.thead { height: 24px; display: grid; grid-template-columns: 108px 138px 152px 124px 160px; background: #fcfafc; border-bottom: 1px solid #ccc; color: #26263a; line-height: 25px; margin-bottom: 1px; }
.thead span { border-right: 1px solid #ccc; padding-left: 6px; white-space: nowrap; }
.row { display: grid; grid-template-columns: 14px 24px 77px 138px 153px 123px 200px; height: 24.720px; align-items: center; white-space: nowrap; background: #fff; }
.row svg { width: 21px; height: 22px; margin-top: -1px; }
.row span { line-height: 25px; letter-spacing: -.05px; }
.row span:nth-of-type(1) { padding-left: 1px; letter-spacing: .15px; }
.row span:nth-of-type(2) { letter-spacing: .15px; }
.row span:nth-of-type(4) { letter-spacing: -.1px; }
.row span:nth-of-type(5) { letter-spacing: .42px; }
.row span.long { margin-left: -1px; }
.row em { color: #e32b38; font: italic 700 15px/12px "Liberation Serif", serif; padding: 8px 0 0 5px; }
.picked { background: linear-gradient(90deg, #fff 38px, #3196fc 38px); color: #fff; }
.hscroll { height: 25px; flex: none; display: flex; border: 1px solid #a5a5a5; border-width: 1px 0 2px 2px; background: #fff; }
.hleft { width: 23px; display: flex; align-items: center; justify-content: center; background: #fff; }
.hthumb { width: 340px; background: #dcdadd; border-left: 1px solid #999; display: flex; gap: 2px; align-items: center; padding-left: 155px; }
.hthumb i { width: 3px; height: 9px; background: #777; }
.detail { margin-top: 12px; flex: 1; border: 1px solid #999; border-width: 1px 0 0 1px; padding-left: 2px; padding-top: 2px; }
.dtabs { height: 33px; border-bottom: 2px solid #aaa; display: flex; }
.dtabs > span { width: 156px; height: 33px; border: 1px solid #999; border-bottom: 0; background: #fff; padding-left: 14px; display: flex; gap: 3px; align-items: center; padding-bottom: 5px; }
.dtools { height: 46px; margin-left: 5px; background: #fff; border: 1px solid #888; border-width: 1px 0 1px 1px; display: grid; grid-template-columns: 15px 42px 40px 6px 41px 38px 6px 39px 6px 39px 6px 52px; align-items: center; justify-items: center; grid-auto-flow: column; }
.dtools .grip { width: 3px; height: 39px; border-right: 1px solid #777; border-bottom: 2px solid #777; }
.dtools .far { margin-left: 275px; }
.dtools .edge { margin-left: 14px; }
.detail h3 { margin: 5px 0 0 5px; height: 40px; background: #929490; color: #fff; font-size: 23.200px; line-height: 38px; padding-left: 7px; }

/* floating layers */
.record { position: absolute; left: 36px; top: 169px; width: 28px; height: 28px; border-radius: 50%; border: 4px solid #fff; background: #f04937; box-shadow: 0 0 3px #888; }
.float { position: absolute; left: 32px; top: 242px; width: 64px; height: 64px; border-radius: 5px; background: rgba(70, 70, 70, .6); display: grid; grid-template-columns: 16px 16px; gap: 6px 5px; padding: 13px; }
.float i { width: 16px; height: 16px; border-radius: 2px; background: #fff; }
.pointer { position: absolute; left: 400px; top: 590px; }
.call { position: absolute; left: 998px; top: 564px; width: 308px; height: 156px; overflow: hidden; background: #fafafa; }
.call-top { height: 134px; background: #ebebeb; display: flex; padding: 20px 0 0 110px; align-items: flex-start; }
.avatar { width: 88px; height: 88px; border: 2px solid #aaa; border-radius: 50%; background: #f5f5f5; color: #a45ca8; font: 400 43.500px/86px Roboto, sans-serif; text-align: center; }
.shrink { width: 48px; height: 48px; margin: -10px 0 0 50px; border-radius: 4px; background: #898989; display: flex; align-items: center; justify-content: center; }
.call-name { display: flex; align-items: flex-start; padding: 4px 0 0 30px; color: #333; font: 400 24px/34px Roboto, sans-serif; white-space: nowrap; }
.call-name span { width: 207px; margin-left: 12px; }
```
